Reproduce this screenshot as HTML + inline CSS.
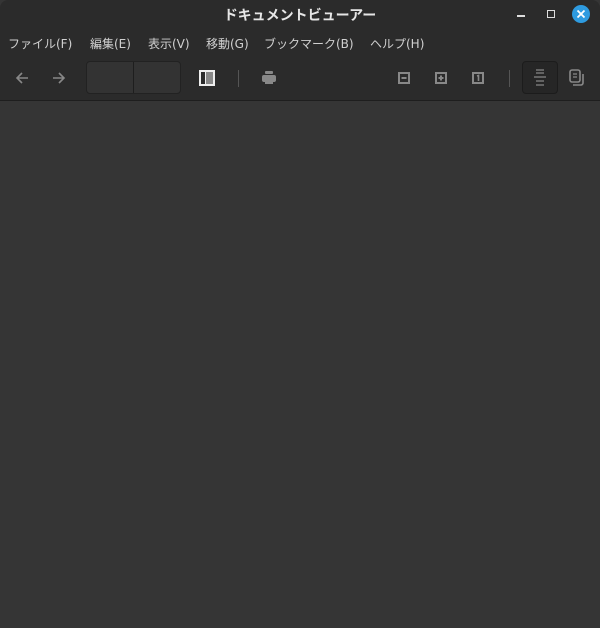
<!DOCTYPE html>
<html><head><style>
*{margin:0;padding:0;box-sizing:border-box}
body{width:600px;height:628px;background:#353535;overflow:hidden;font-family:"Liberation Sans","Noto Sans CJK JP",sans-serif;position:relative}
#hdr{position:absolute;left:0;top:0;width:600px;height:101px;background:#2b2b2b;border-radius:8px 8px 0 0;border-bottom:1px solid #1e1e1e}
.title{position:absolute;left:0;right:0;top:5px;text-align:center;color:#e6e6e6;font-size:14px;font-weight:bold}
.menu{position:absolute;top:35px;font-size:12px;color:#d0d0d0;font-family:"DejaVu Sans","Noto Sans CJK JP",sans-serif}
.ic{position:absolute}
</style></head><body>
<div id="hdr">
<div class="title">ドキュメントビューアー</div>
<div class="menu" style="left:8px">ファイル(F)</div>
<div class="menu" style="left:90px">編集(E)</div>
<div class="menu" style="left:148px">表示(V)</div>
<div class="menu" style="left:206px">移動(G)</div>
<div class="menu" style="left:264px">ブックマーク(B)</div>
<div class="menu" style="left:370px">ヘルプ(H)</div>
<!-- window controls -->
<div class="ic" style="left:517px;top:15px;width:8px;height:1.5px;background:#ddd"></div>
<div class="ic" style="left:547px;top:10px;width:8px;height:8px;border:1.5px solid #ddd"></div>
<svg class="ic" style="left:572px;top:5px" width="18" height="18"><circle cx="9" cy="9" r="9" fill="#2e9be0"/><path d="M5.5 5.5L12.5 12.5M12.5 5.5L5.5 12.5" stroke="#fff" stroke-width="1.8"/></svg>
<!-- toolbar -->
<svg class="ic" style="left:14px;top:70px" width="16" height="16"><path d="M14 8H3M8 3L3 8L8 13" stroke="#888" stroke-width="1.6" fill="none"/></svg>
<svg class="ic" style="left:51px;top:70px" width="16" height="16"><path d="M2 8H13M8 3L13 8L8 13" stroke="#888" stroke-width="1.6" fill="none"/></svg>
<div class="ic" style="left:86px;top:61px;width:95px;height:33px;background:#333;border:1px solid #222;border-radius:4px"></div>
<div class="ic" style="left:133px;top:62px;width:1px;height:31px;background:#1e1e1e"></div>
<div class="ic" style="left:199px;top:70px;width:16px;height:16px;border:2px solid #eee;background:linear-gradient(90deg,#2b2b2b 0 4px,#eee 4px 5px,#888 5px)"></div>
<div class="ic" style="left:238px;top:70px;width:1px;height:17px;background:#555"></div>
<svg class="ic" style="left:261px;top:70px" width="16" height="16"><rect x="4" y="1" width="8" height="3" rx="1" fill="#888"/><rect x="1" y="5" width="14" height="7" rx="2" fill="#888"/><rect x="4" y="10" width="8" height="4" fill="#888"/></svg>
<svg class="ic" style="left:398px;top:72px" width="12" height="12"><rect x="1" y="1" width="10" height="10" fill="none" stroke="#888" stroke-width="2"/><path d="M3.5 6H8.5" stroke="#888" stroke-width="2"/></svg>
<svg class="ic" style="left:435px;top:72px" width="12" height="12"><rect x="1" y="1" width="10" height="10" fill="none" stroke="#888" stroke-width="2"/><path d="M3.5 6H8.5M6 3.5V8.5" stroke="#888" stroke-width="2"/></svg>
<svg class="ic" style="left:472px;top:72px" width="12" height="12"><rect x="1" y="1" width="10" height="10" fill="none" stroke="#888" stroke-width="2"/><path d="M5 4L6.5 3.5V9" stroke="#888" stroke-width="1.6" fill="none"/></svg>
<div class="ic" style="left:509px;top:70px;width:1px;height:17px;background:#555"></div>
<div class="ic" style="left:522px;top:61px;width:36px;height:33px;background:#262626;border:1px solid #1c1c1c;border-radius:4px"></div>
<svg class="ic" style="left:533px;top:69px" width="14" height="18"><path d="M3 1H11M3 4H11M1 8H13M3 12H11M3 16H11" stroke="#777" stroke-width="1.5"/></svg>
<svg class="ic" style="left:569px;top:69px" width="17" height="17"><rect x="1" y="1" width="10" height="12" rx="2" fill="none" stroke="#888" stroke-width="1.6"/><path d="M14 5V14C14 15 13 16 12 16H4" stroke="#888" stroke-width="1.6" fill="none"/><path d="M4 5H8M4 8H8" stroke="#888" stroke-width="1.3"/></svg>
</div>
</body></html>
